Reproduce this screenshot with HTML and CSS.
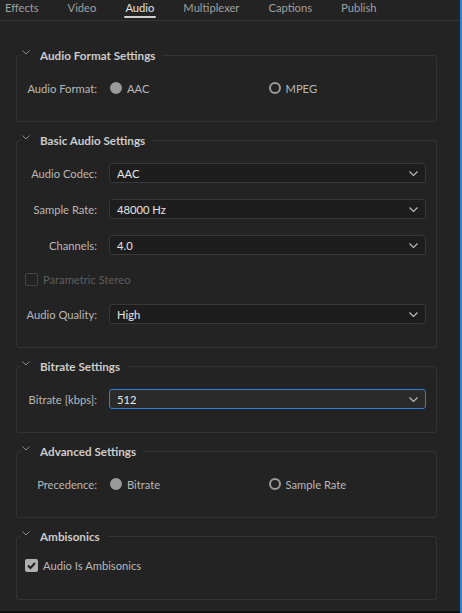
FILE: index.html
```html
<!DOCTYPE html>
<html lang="en">
<head>
<meta charset="utf-8">
<title>Audio export settings</title>
<link rel="stylesheet" href="styles.css">
</head>
<body>
<div class="panel">
  <nav class="tabs">
    <span class="tab">Effects</span>
    <span class="tab">Video</span>
    <span class="tab active">Audio</span>
    <span class="tab">Multiplexer</span>
    <span class="tab">Captions</span>
    <span class="tab">Publish</span>
  </nav>
  <div class="content">
    <fieldset class="group g-format">
      <legend><svg class="chev" viewBox="0 0 8 5" width="8" height="5"><path d="M0.5 0.5 L4 4 L7.5 0.5" fill="none" stroke="#8a8a8a" stroke-width="1"/></svg><span>Audio Format Settings</span></legend>
      <div class="row">
        <span class="lbl">Audio Format:</span>
        <div class="radios">
          <span class="opt"><span class="radio on"></span>AAC</span>
          <span class="opt"><span class="radio"></span>MPEG</span>
        </div>
      </div>
    </fieldset>

    <fieldset class="group g-basic">
      <legend><svg class="chev" viewBox="0 0 8 5" width="8" height="5"><path d="M0.5 0.5 L4 4 L7.5 0.5" fill="none" stroke="#8a8a8a" stroke-width="1"/></svg><span>Basic Audio Settings</span></legend>
      <div class="row">
        <span class="lbl">Audio Codec:</span>
        <div class="select"><span>AAC</span><svg class="dd" viewBox="0 0 9 5" width="9" height="5"><path d="M0.5 0.5 L4.5 4.5 L8.5 0.5" fill="none" stroke="#b8b8b8" stroke-width="1.2"/></svg></div>
      </div>
      <div class="row">
        <span class="lbl">Sample Rate:</span>
        <div class="select"><span>48000 Hz</span><svg class="dd" viewBox="0 0 9 5" width="9" height="5"><path d="M0.5 0.5 L4.5 4.5 L8.5 0.5" fill="none" stroke="#b8b8b8" stroke-width="1.2"/></svg></div>
      </div>
      <div class="row">
        <span class="lbl">Channels:</span>
        <div class="select"><span>4.0</span><svg class="dd" viewBox="0 0 9 5" width="9" height="5"><path d="M0.5 0.5 L4.5 4.5 L8.5 0.5" fill="none" stroke="#b8b8b8" stroke-width="1.2"/></svg></div>
      </div>
      <div class="row check-row">
        <span class="check disabled"></span><span class="check-text disabled-text">Parametric Stereo</span>
      </div>
      <div class="row">
        <span class="lbl">Audio Quality:</span>
        <div class="select"><span>High</span><svg class="dd" viewBox="0 0 9 5" width="9" height="5"><path d="M0.5 0.5 L4.5 4.5 L8.5 0.5" fill="none" stroke="#b8b8b8" stroke-width="1.2"/></svg></div>
      </div>
    </fieldset>

    <fieldset class="group g-bitrate">
      <legend><svg class="chev" viewBox="0 0 8 5" width="8" height="5"><path d="M0.5 0.5 L4 4 L7.5 0.5" fill="none" stroke="#8a8a8a" stroke-width="1"/></svg><span>Bitrate Settings</span></legend>
      <div class="row">
        <span class="lbl">Bitrate [kbps]:</span>
        <div class="select focused"><span>512</span><svg class="dd" viewBox="0 0 9 5" width="9" height="5"><path d="M0.5 0.5 L4.5 4.5 L8.5 0.5" fill="none" stroke="#b8b8b8" stroke-width="1.2"/></svg></div>
      </div>
    </fieldset>

    <fieldset class="group g-adv">
      <legend><svg class="chev" viewBox="0 0 8 5" width="8" height="5"><path d="M0.5 0.5 L4 4 L7.5 0.5" fill="none" stroke="#8a8a8a" stroke-width="1"/></svg><span>Advanced Settings</span></legend>
      <div class="row">
        <span class="lbl">Precedence:</span>
        <div class="radios">
          <span class="opt"><span class="radio on"></span>Bitrate</span>
          <span class="opt"><span class="radio"></span>Sample Rate</span>
        </div>
      </div>
    </fieldset>

    <fieldset class="group g-amb">
      <legend><svg class="chev" viewBox="0 0 8 5" width="8" height="5"><path d="M0.5 0.5 L4 4 L7.5 0.5" fill="none" stroke="#8a8a8a" stroke-width="1"/></svg><span>Ambisonics</span></legend>
      <div class="row check-row">
        <span class="check checked"><svg viewBox="0 0 13 13" width="13" height="13"><path d="M3 6.5 L5.5 9 L10 4" fill="none" stroke="#1e1e1e" stroke-width="2"/></svg></span><span class="check-text">Audio Is Ambisonics</span>
      </div>
    </fieldset>
  </div>
  <div class="footer"></div>
</div>
</body>
</html>
```

FILE: styles.css
```css
* { box-sizing: border-box; }

html, body {
  margin: 0;
  padding: 0;
  background: #232323;
}

body {
  font-family: Lato, "Open Sans", sans-serif;
  font-size: 11.2px;
  color: #b8b8b8;
  width: 462px;
  height: 613px;
  overflow: hidden;
}

.panel {
  height: 613px;
  display: flex;
  flex-direction: column;
  border-right: 2px solid #2d7fd8;
}

.tabs {
  display: flex;
  height: 21px;
  padding-left: 5px;
  gap: 29px;
  border-bottom: 1px solid #333333;
  flex: none;
}

.tab {
  line-height: 16px;
  color: #a0a0a0;
  position: relative;
  height: 20px;
}

.tab.active {
  color: #e2e2e2;
}

.tab.active::after {
  content: "";
  position: absolute;
  left: -1px;
  right: -2px;
  top: 16px;
  height: 2px;
  background: #cfcfcf;
  border-radius: 1px;
}

.content {
  flex: 1;
  padding: 26px 23px 0 16px;
  display: flex;
  flex-direction: column;
  gap: 10px;
}

.group {
  margin: 0;
  padding: 15px 0 23px 0;
  border: 1px solid #333333;
  border-radius: 3px;
  min-inline-size: 0;
  display: flex;
  flex-direction: column;
  gap: 16px;
}

.group legend {
  margin-left: 4px;
  padding: 0 7px 0 1px;
  height: 16px;
  line-height: 16px;
  display: flex;
  align-items: center;
  gap: 10px;
  font-weight: bold;
  font-size: 11.7px;
  color: #cccccc;
}

.chev {
  display: block;
  margin-top: -6px;
}

.row {
  display: flex;
  align-items: center;
  height: 20px;
  padding: 0 10px 0 5px;
}

.lbl {
  width: 75px;
  flex: none;
  text-align: right;
  margin-right: 12px;
  white-space: nowrap;
}

.select {
  flex: 1;
  height: 20px;
  border: 1px solid #383838;
  border-radius: 3px;
  background: #1d1d1d;
  display: flex;
  align-items: center;
  justify-content: space-between;
  padding: 0 7px 0 7px;
  color: #e6e6e6;
}

.select.focused {
  border-color: #2d80dc;
  background: #2a2a2a;
}

.dd {
  display: block;
}

.radios {
  flex: 1;
  display: grid;
  grid-template-columns: 1fr 1fr;
}

.opt {
  display: flex;
  align-items: center;
  gap: 5px;
  padding-left: 1px;
}

.radio {
  width: 12px;
  height: 12px;
  border-radius: 50%;
  border: 2px solid #9a9a9a;
  flex: none;
}

.radio.on {
  background: #9a9a9a;
  border-color: #9a9a9a;
}

.check-row {
  height: 17px;
  padding-left: 8px;
}

.check {
  width: 13px;
  height: 13px;
  border-radius: 2px;
  flex: none;
  margin-right: 5px;
}

.check.disabled {
  border: 1px solid #454545;
}

.check.checked {
  background: #b0b0b0;
}

.check svg { display: block; }

.disabled-text { color: #5e5e5e; }

.g-amb {
  padding-top: 13px;
  padding-bottom: 25px;
}

.footer {
  height: 2px;
  background: #0e0e0e;
  flex: none;
}
```
